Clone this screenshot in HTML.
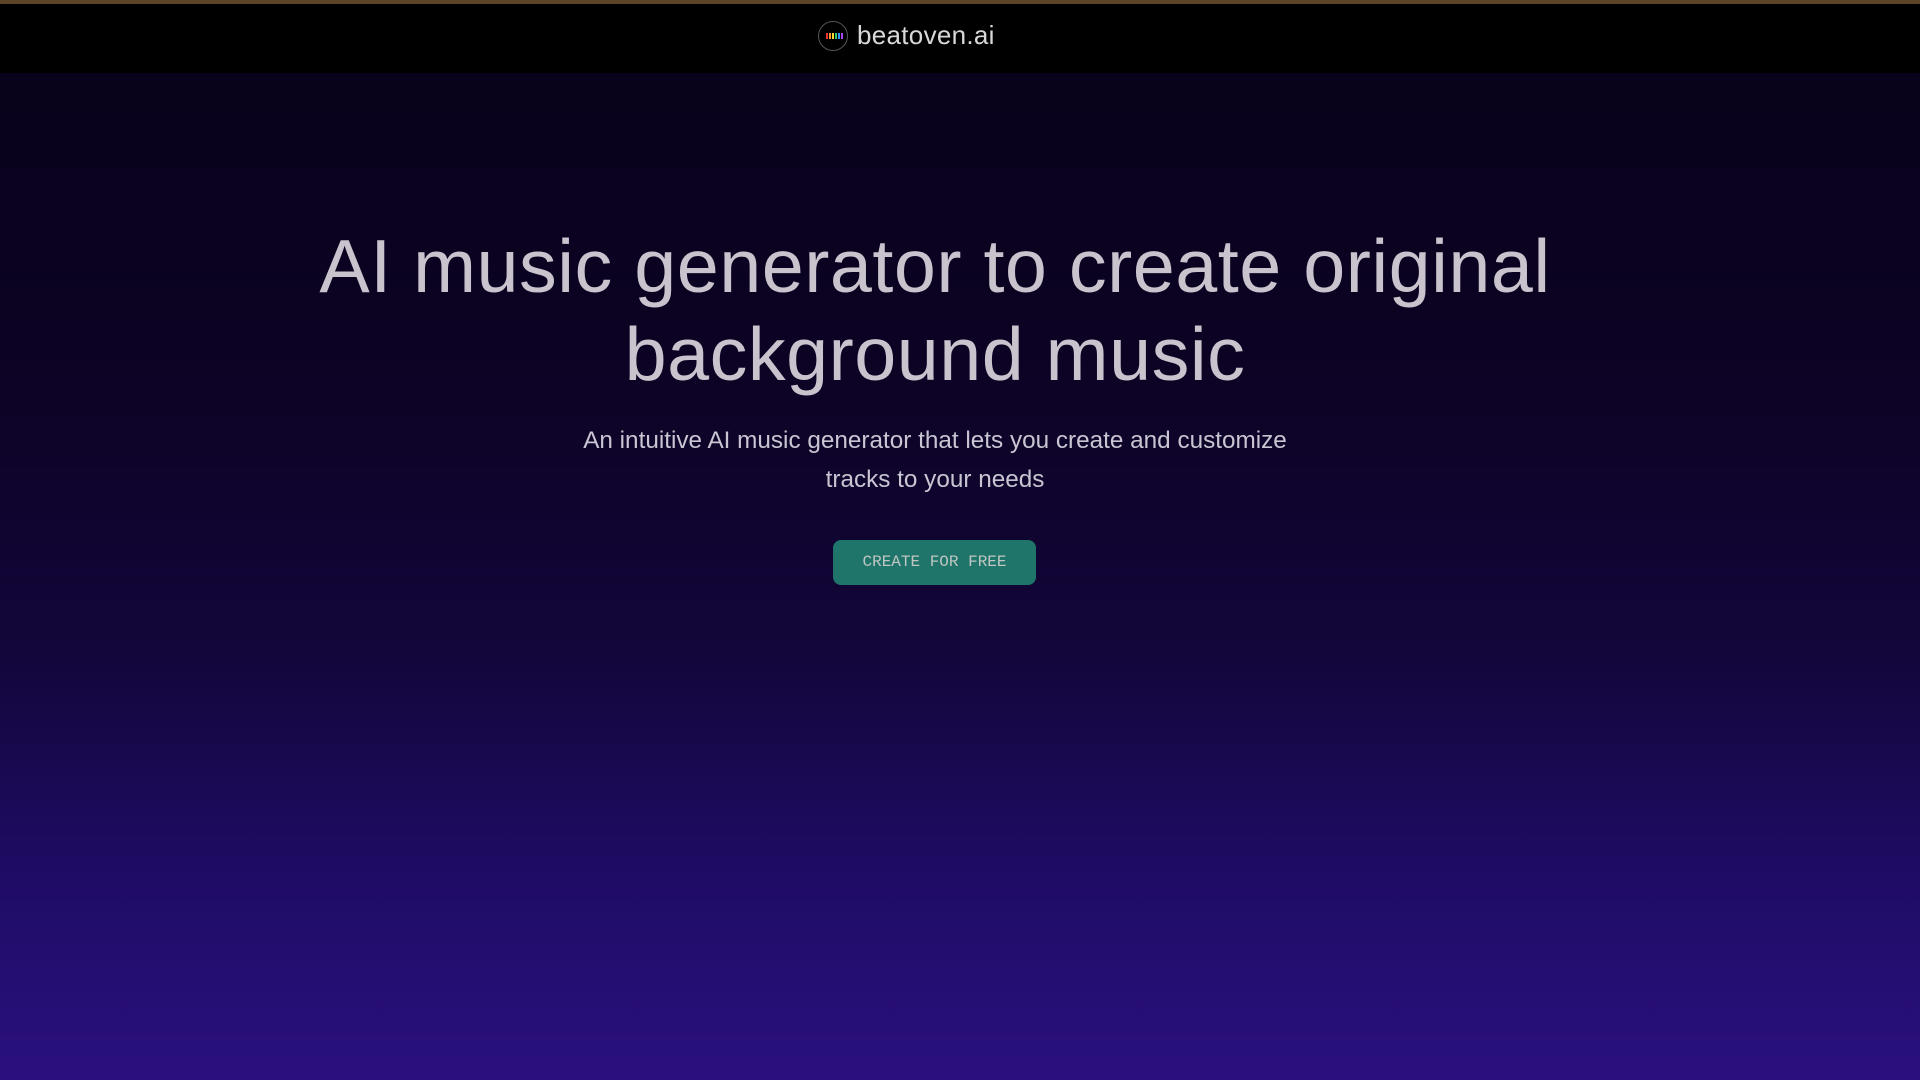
<!DOCTYPE html>
<html><head><style>
html,body{margin:0;padding:0;width:1920px;height:1080px;overflow:hidden}
body{background:linear-gradient(180deg,#08021a 73px,#0d0326 400px,#12063a 650px,#1f0c66 880px,#2a107e 1080px);font-family:"Liberation Sans",sans-serif}
.top{height:4px;background:#5d4527}
.hdr{height:69px;background:#000;position:relative}
.logo{position:absolute;left:818px;top:17px;width:30px;height:30px;border:1px solid #555;border-radius:50%;box-sizing:border-box}
.bars{position:absolute;left:7px;top:11px;display:flex;gap:1px}
.bars i{display:block;width:2px;height:6px}
.brand{position:absolute;left:857px;top:16px;font-size:26px;color:#d8d8d8;letter-spacing:0.3px}
h1{position:absolute;left:0;width:1870px;top:222px;margin:0;text-align:center;font-weight:normal;font-size:75.5px;line-height:88px;color:#c8c3cc;letter-spacing:0.5px}
p{position:absolute;left:0;width:1870px;top:421px;margin:0;text-align:center;font-size:24.3px;line-height:39px;color:#c9c5d2}
.btn{position:absolute;left:833px;top:540px;width:203px;height:45px;background:#20756a;border-radius:8px;color:#c0c6c4;font-family:"Liberation Mono",monospace;font-size:16px;line-height:45px;text-align:center}
</style></head><body>
<div class="top"></div>
<div class="hdr"><div class="logo"><div class="bars"><i style="background:#e33"></i><i style="background:#f93"></i><i style="background:#fd3"></i><i style="background:#3c6"></i><i style="background:#39f"></i><i style="background:#a4f"></i></div></div><div class="brand">beatoven.ai</div></div>
<h1>AI music generator to create original<br>background music</h1>
<p>An intuitive AI music generator that lets you create and customize<br>tracks to your needs</p>
<div class="btn">CREATE FOR FREE</div>
</body></html>
